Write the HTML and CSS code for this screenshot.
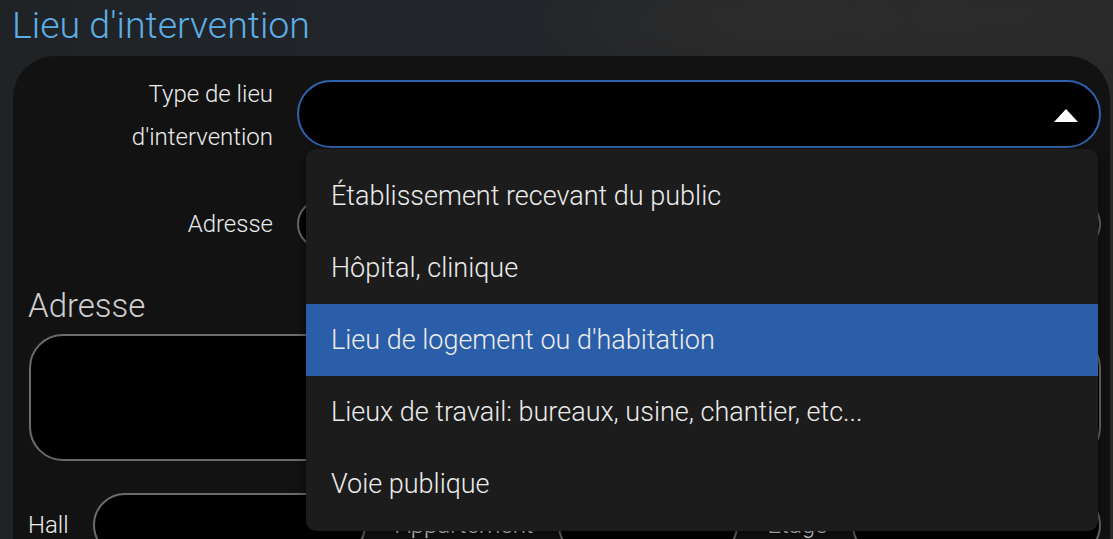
FILE: index.html
```html
<!DOCTYPE html>
<html lang="fr">
<head>
	<meta charset="UTF-8">
	<title>Lieu d'intervention</title>
	<link rel="stylesheet" href="styles.css">
</head>
<body>
	<h1 class="page-title">Lieu d'intervention</h1>

	<div class="panel">
		<!-- type de lieu -->
		<div class="row row-type">
			<label class="row-label">Type de lieu<br>d'intervention</label>
			<div class="select-wrap">
				<div class="select open">
					<span class="caret"></span>
				</div>
				<ul class="options">
					<li>Établissement recevant du public</li>
					<li>Hôpital, clinique</li>
					<li class="selected">Lieu de logement ou d'habitation</li>
					<li>Lieux de travail: bureaux, usine, chantier, etc...</li>
					<li>Voie publique</li>
				</ul>
			</div>
		</div>

		<div class="row row-addr">
			<label class="row-label">Adresse</label>
			<div class="field field-addr"></div>
		</div>

		<h2 class="section-title">Adresse</h2>
		<div class="field field-area"></div>

		<div class="row-small">
			<label class="small-label">Hall</label>
			<div class="field field-hall"></div>
			<label class="small-label lbl-app">Appartement</label>
			<div class="field field-app"></div>
			<label class="small-label lbl-etage">Etage</label>
			<div class="field field-etage"></div>
		</div>
	</div>
</body>
</html>
```

FILE: styles.css
```css
html, body {
	margin: 0;
	height: 100%;
	overflow: hidden;
}
body {
	font-family: Roboto, "Liberation Sans", sans-serif;
	background:
		radial-gradient(ellipse 260px 70px at 780px 20px, #2c2c2c, transparent),
		radial-gradient(ellipse 220px 60px at 1010px 15px, #2b2b2b, transparent),
		linear-gradient(90deg, #202326 0%, #22252a 45%, #262728 65%, #292929 100%);
	color: #e6e6e6;
}

.page-title {
	margin: 0;
	padding-left: 12px;
	font-size: 37.5px;
	font-weight: 300;
	line-height: 50px;
	color: #5caee6;
}

.panel {
	margin: 6px 3px 0 13px;
	padding: 17px 9px 0 15px;
	background: #121212;
	border-radius: 42px 42px 0 0;
	height: 600px;
}

/* lignes formulaire */
.row {
	display: flex;
	gap: 24px;
}
.row-label {
	width: 245px;
	flex: none;
	text-align: right;
	font-size: 24px;
	font-weight: 300;
	line-height: 43px;
	color: #ececec;
}
.row-type {
	align-items: flex-start;
}
.select-wrap {
	position: relative;
	flex: 1;
	margin-top: 7px;
	z-index: 5;
}
.select {
	height: 64px;
	background: #000;
	border: 2px solid #2f62ad;
	border-radius: 34px;
	position: relative;
}
.caret {
	position: absolute;
	right: 21px;
	top: 27px;
	width: 0;
	height: 0;
	border-left: 12px solid transparent;
	border-right: 12px solid transparent;
	border-bottom: 13px solid #fff;
}

.options {
	position: absolute;
	top: 69px;
	left: 9px;
	right: 3px;
	margin: 0;
	padding: 11px 0;
	list-style: none;
	background: #1c1c1c;
	border-radius: 10px;
	box-shadow: 0 4px 12px rgba(0, 0, 0, .5);
}
.options li {
	height: 72px;
	line-height: 72px;
	padding-left: 25px;
	font-size: 27px;
	font-weight: 300;
	color: #ececec;
}
.options li.selected {
	background: #2b5ea8;
}

.row-addr {
	margin-top: 40px;
	align-items: center;
}
.field {
	background: #000;
	border: 2px solid #6b6b6b;
	box-sizing: border-box;
}
.field-addr {
	flex: 1;
	height: 50px;
	border-radius: 25px;
}

.section-title {
	margin: 38px 0 9px;
	font-size: 33px;
	font-weight: 300;
	line-height: 38px;
	color: #cfcfcf;
}
.field-area {
	margin-left: 1px;
	height: 127px;
	border-radius: 34px;
}

.row-small {
	display: flex;
	align-items: center;
	margin-top: 32px;
}
.small-label {
	font-size: 24px;
	font-weight: 300;
	color: #ececec;
}
.field-hall,
.field-app,
.field-etage {
	height: 64px;
	border-radius: 32px;
	margin-left: 24px;
}
.field-hall {
	width: 273px;
}
.lbl-app,
.lbl-etage {
	margin-left: 30px;
}
.field-app {
	width: 180px;
}
.field-etage {
	flex: 1;
}
```
